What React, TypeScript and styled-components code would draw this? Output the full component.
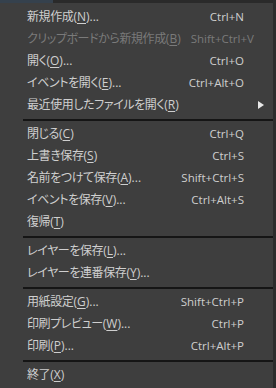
import styled, { createGlobalStyle } from 'styled-components';

type Item = {
  label: string;
  key?: string;
  tail?: string;
  shortcut?: string;
  disabled?: boolean;
  submenu?: boolean;
};

const groups: Item[][] = [
  [
    { label: '新規作成', key: 'N', tail: '...', shortcut: 'Ctrl+N' },
    { label: 'クリップボードから新規作成', key: 'B', shortcut: 'Shift+Ctrl+V', disabled: true },
    { label: '開く', key: 'O', tail: '...', shortcut: 'Ctrl+O' },
    { label: 'イベントを開く', key: 'E', tail: '...', shortcut: 'Ctrl+Alt+O' },
    { label: '最近使用したファイルを開く', key: 'R', submenu: true },
  ],
  [
    { label: '閉じる', key: 'C', shortcut: 'Ctrl+Q' },
    { label: '上書き保存', key: 'S', shortcut: 'Ctrl+S' },
    { label: '名前をつけて保存', key: 'A', tail: '...', shortcut: 'Shift+Ctrl+S' },
    { label: 'イベントを保存', key: 'V', tail: '...', shortcut: 'Ctrl+Alt+S' },
    { label: '復帰', key: 'T' },
  ],
  [
    { label: 'レイヤーを保存', key: 'L', tail: '...' },
    { label: 'レイヤーを連番保存', key: 'Y', tail: '...' },
  ],
  [
    { label: '用紙設定', key: 'G', tail: '...', shortcut: 'Shift+Ctrl+P' },
    { label: '印刷プレビュー', key: 'W', tail: '...', shortcut: 'Ctrl+P' },
    { label: '印刷', key: 'P', tail: '...', shortcut: 'Ctrl+Alt+P' },
  ],
  [{ label: '終了', key: 'X' }],
];

export default function App() {
  return (
    <>
      <GlobalStyle />
      <MenuStyles>
        <TopStrip>
          <TabEdge />
        </TopStrip>
        <List>
          {groups.map((group, gi) => (
            <Group key={gi}>
              {gi > 0 && <Separator />}
              {group.map((item) => (
                <Row key={item.label} $disabled={item.disabled}>
                  <Label>
                    <Jp>{item.label}</Jp>(<u>{item.key}</u>){item.tail}
                  </Label>
                  <Shortcut>{item.shortcut}</Shortcut>
                  <Arrow>
                    {item.submenu && (
                      <svg width="6" height="8" viewBox="0 0 6 8">
                        <path d="M0 0 L6 4 L0 8 Z" fill="#e8e8e8" />
                      </svg>
                    )}
                  </Arrow>
                </Row>
              ))}
            </Group>
          ))}
        </List>
      </MenuStyles>
    </>
  );
}

const GlobalStyle = createGlobalStyle`
  body {
    margin: 0;
    background: #3d3d3d;
  }
`;

const MenuStyles = styled.div`
  width: 276px;
  height: 388px;
  background: #3e3e3e;
  border-right: 3px solid #2c2c2c;
  box-sizing: border-box;
  display: flex;
  flex-direction: column;
  font-family: 'Segoe UI', 'Open Sans', 'Noto Sans CJK JP', sans-serif;
  font-size: 12px;
  font-feature-settings: 'palt';
  color: #cfcfcf;
  overflow: hidden;
`;

const TopStrip = styled.div`
  height: 3px;
  background: #2a2a2a;
  display: flex;
`;

const TabEdge = styled.div`
  width: 53px;
  background: #35414d;
`;

const List = styled.div`
  padding-top: 3px;
  display: flex;
  flex-direction: column;
`;

const Group = styled.div`
  display: flex;
  flex-direction: column;
`;

const Row = styled.div<{ $disabled?: boolean }>`
  height: 22px;
  display: grid;
  grid-template-columns: 1fr auto 19px;
  column-gap: 10px;
  align-items: center;
  padding-left: 27px;
  color: ${(p) => (p.$disabled ? '#7a7a7a' : '#cfcfcf')};
  white-space: nowrap;

  u {
    text-underline-offset: 2px;
  }
`;

const Label = styled.span`
  line-height: 22px;
`;

const Jp = styled.span`
  letter-spacing: -0.4px;
`;

const Shortcut = styled.span`
  text-align: right;
  line-height: 22px;
  font-size: 11.5px;
`;

const Arrow = styled.span`
  display: flex;
  justify-content: flex-start;
  padding-left: 4px;
`;

const Separator = styled.div`
  height: 7px;
  display: flex;
  align-items: center;
  padding-left: 23px;

  &::after {
    content: '';
    flex: 1;
    height: 2px;
    background: #151515;
  }
`;
